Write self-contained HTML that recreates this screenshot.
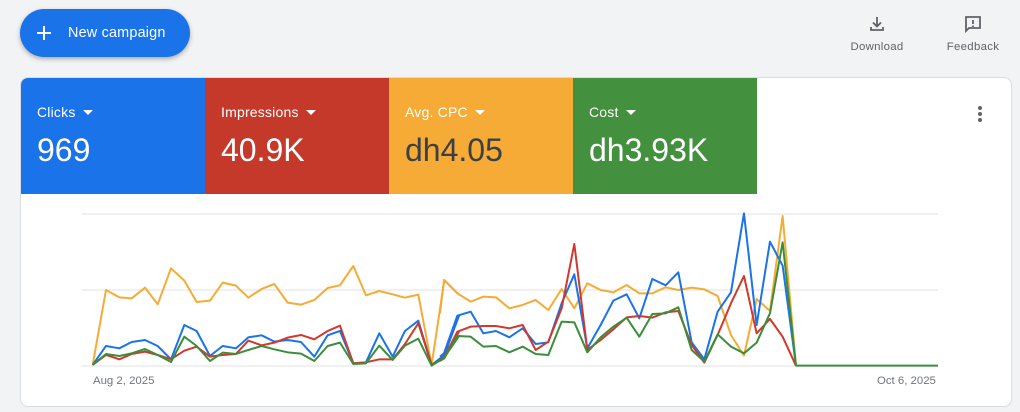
<!DOCTYPE html>
<html><head><meta charset="utf-8"><style>
body{margin:0;width:1020px;height:412px;background:#f1f3f4;font-family:"Liberation Sans",sans-serif;position:relative;overflow:hidden}
.btn{position:absolute;left:20px;top:9px;width:170px;height:48px;border-radius:24px;background:#1a73e8;box-shadow:0 2px 5px rgba(0,0,0,.3);color:#fff;font-size:14.4px}
.btn span{position:absolute;left:48px;top:16px;letter-spacing:.2px}
.tb{position:absolute;top:14px;text-align:center;font-size:11.4px;color:#5f6368;letter-spacing:.3px}
.card{position:absolute;left:20px;top:77px;width:990px;height:328px;background:#fff;border:1px solid #dadce0;border-radius:8px;overflow:hidden}
.tile{position:absolute;top:0;width:184px;height:116px;color:#fff}
.tile .l{position:absolute;left:16px;top:26px;font-size:14px;letter-spacing:.2px}
.tile .l i{display:inline-block;width:0;height:0;border-left:5px solid transparent;border-right:5px solid transparent;border-top:5px solid #fff;margin-left:7px;vertical-align:middle;position:relative;top:-1px}
.tile .v{position:absolute;left:16px;top:54px;font-size:32px}
.lbl{position:absolute;font-size:11.4px;color:#70757a;top:375px}
</style></head><body>
<div class="btn"><svg style="position:absolute;left:16px;top:16px" width="16" height="16"><path d="M8 1V15M1 8H15" stroke="#fff" stroke-width="2"/></svg><span>New campaign</span></div>
<div class="tb" style="left:846px;width:62px"><svg width="20" height="20" viewBox="0 0 20 20" style="display:block;margin:0 auto 7px"><path d="M10 3V12M6 8.5L10 12.5L14 8.5M4 13V16H16V13" stroke="#5f6368" stroke-width="1.8" fill="none"/></svg>Download</div>
<div class="tb" style="left:942px;width:62px"><svg width="20" height="20" viewBox="0 0 20 20" style="display:block;margin:0 auto 7px"><path d="M3 3H17V14H6L3 17Z" stroke="#5f6368" stroke-width="1.8" fill="none"/><path d="M10 6V10M10 11.5V13" stroke="#5f6368" stroke-width="1.8"/></svg>Feedback</div>
<div class="card">
<div class="tile" style="left:0;background:#1a73e8"><div class="l">Clicks<i></i></div><div class="v">969</div></div>
<div class="tile" style="left:184px;background:#c5392a"><div class="l">Impressions<i></i></div><div class="v">40.9K</div></div>
<div class="tile" style="left:368px;background:#f5ab35;"><div class="l">Avg. CPC<i></i></div><div class="v" style="color:#3c4043">dh4.05</div></div>
<div class="tile" style="left:552px;background:#43903f"><div class="l">Cost<i></i></div><div class="v">dh3.93K</div></div>
<svg style="position:absolute;left:955px;top:27px" width="8" height="18"><circle cx="4" cy="3" r="2" fill="#5f6368"/><circle cx="4" cy="9" r="2" fill="#5f6368"/><circle cx="4" cy="15" r="2" fill="#5f6368"/></svg>
</div>
<svg style="position:absolute;left:0;top:0" width="1020" height="412">
<g stroke="#ececec" stroke-width="1.5"><path d="M82 214H938M82 290H938M82 366H938"/></g>
<g fill="none" stroke-width="6" stroke-linejoin="round" transform="translate(80,200) scale(0.3333)">
<polyline stroke="#f5ab35" points="38,495 78,270 118,292 155,295 195,263 233,313 273,205 313,242 350,306 390,302 428,248 468,257 505,293 545,267 583,252 623,308 663,314 703,300 743,264 780,256 820,198 858,286 898,273 938,283 975,293 1015,284 1055,495 1093,240 1138,285"/>
<polyline stroke="#1a73e8" points="38,495 78,438 118,445 155,426 195,420 233,438 273,478 313,375 350,393 390,468 428,438 468,445 505,412 545,406 583,425 623,420 663,426 703,470 743,406 780,393 820,490 858,487 898,400 938,470 975,393 1015,362 1055,495 1093,465 1138,345"/>
<polyline stroke="#d0392b" points="38,495 78,465 118,478 155,462 195,455 233,465 273,478 313,452 350,440 390,470 428,465 468,462 505,422 545,436 583,428 623,413 663,405 703,418 743,393 780,377 820,490 858,487 898,478 938,478 975,432 1015,370 1055,495 1093,475 1138,393"/>
<polyline stroke="#3a8e3c" points="38,495 78,462 118,468 155,460 195,447 233,465 273,486 313,410 350,438 390,483 428,458 468,462 505,450 545,438 583,448 623,457 663,461 703,483 743,438 780,428 820,492 858,490 898,437 938,480 975,437 1015,416 1055,497 1093,472 1138,407"/>
</g>
<g fill="none" stroke-width="6" stroke-linejoin="round" transform="translate(440,200) scale(0.3333)">
<polyline stroke="#f5ab35" points="0,340 12,240 52,280 92,305 130,290 168,292 208,325 248,315 287,300 325,330 365,267 403,325 442,250 482,270 520,277 560,255 598,280 637,280 677,262 715,270 755,263 793,268 833,288 873,405 912,467 950,297 990,333 1028,48 1068,497"/>
<polyline stroke="#1a73e8" points="0,470 12,460 52,347 92,335 130,400 168,393 208,412 248,385 287,432 325,427 365,310 403,223 442,445 482,375 520,302 560,283 598,355 637,237 677,256 715,217 755,427 793,478 833,335 873,277 912,40 950,375 990,125 1028,197 1068,497"/>
<polyline stroke="#d0392b" points="0,480 12,473 52,395 92,380 130,378 168,378 208,385 248,375 287,450 325,425 365,325 403,132 442,450 482,420 520,388 560,352 598,348 637,353 677,337 715,333 755,435 793,488 833,405 873,310 912,228 950,400 990,357 1028,410 1068,497"/>
<polyline stroke="#3a8e3c" points="0,483 12,475 52,408 92,410 130,440 168,438 208,457 248,440 287,462 325,465 365,365 403,367 442,457 482,412 520,380 560,353 598,410 637,342 677,340 715,322 755,450 793,485 833,403 873,440 912,460 950,428 990,340 1028,127 1068,497 1494,497"/>
</g>
</svg>
<div class="lbl" style="left:93px">Aug 2, 2025</div>
<div class="lbl" style="left:877px">Oct 6, 2025</div>
</body></html>
